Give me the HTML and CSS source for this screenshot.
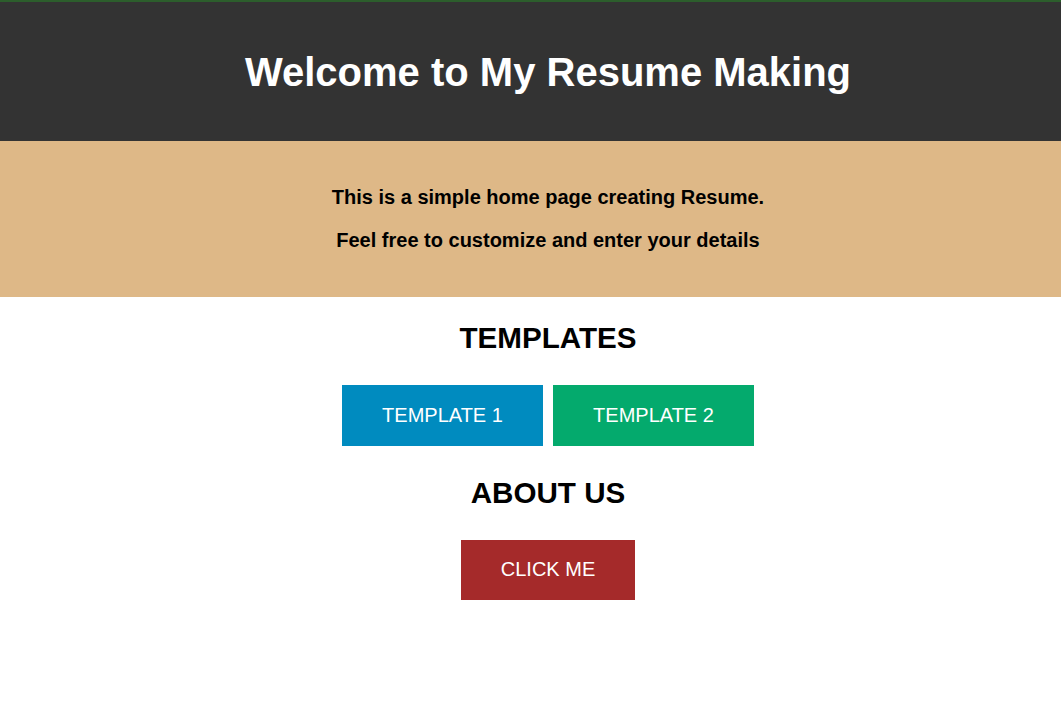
FILE: index.html
```html
<!DOCTYPE html>
<html lang="en">
<head>
<meta charset="utf-8">
<title>Resume Maker</title>
<link rel="stylesheet" href="styles.css">
</head>
<body>
  <header class="site-header">
    <h1 class="site-title">Welcome to My Resume Making</h1>
  </header>
  <section class="intro">
    <p class="intro-text">This is a simple home page creating Resume.</p>
    <p class="intro-text">Feel free to customize and enter your details</p>
  </section>
  <main class="content">
    <h2 class="section-title">TEMPLATES</h2>
    <div class="btn-row">
      <button class="btn btn-blue">TEMPLATE 1</button>
      <button class="btn btn-green">TEMPLATE 2</button>
    </div>
    <h2 class="section-title">ABOUT US</h2>
    <div class="btn-row">
      <button class="btn btn-red">CLICK ME</button>
    </div>
  </main>
</body>
</html>
```

FILE: styles.css
```css
html, body {
  margin: 0;
  padding: 0;
  background: #ffffff;
}

body {
  font-family: "Liberation Sans", Arial, sans-serif;
  color: #000000;
}

.site-header {
  background: #333333;
  border-top: 2px solid #2c5e2c;
  padding: 20px 0 19px 35px;
  text-align: center;
}

.site-title {
  margin: 27px 0;
  font-size: 40px;
  line-height: 46px;
  font-weight: bold;
  color: #ffffff;
}

.intro {
  background: #deb887;
  padding: 25px 0 25px 35px;
  text-align: center;
}

.intro-text {
  margin: 20px 0;
  font-size: 20px;
  line-height: 23px;
  font-weight: bold;
}

.content {
  padding: 0 0 0 35px;
  text-align: center;
}

.section-title {
  margin: 24px 0 0;
  font-size: 29.6px;
  line-height: 33px;
  font-weight: bold;
}

.btn-row {
  display: flex;
  justify-content: center;
  gap: 10px;
  margin-top: 31px;
  padding-bottom: 6px;
}

.btn {
  font-family: "Liberation Sans", Arial, sans-serif;
  font-size: 20px;
  line-height: 23px;
  color: #ffffff;
  border: none;
  padding: 19px 0;
  cursor: pointer;
}

.btn-blue {
  background: #008bbf;
  width: 201px;
}

.btn-green {
  background: #04aa6d;
  width: 201px;
}

.btn-red {
  background: #a52a2a;
  width: 174px;
  padding: 18px 0 19px;
}
```
